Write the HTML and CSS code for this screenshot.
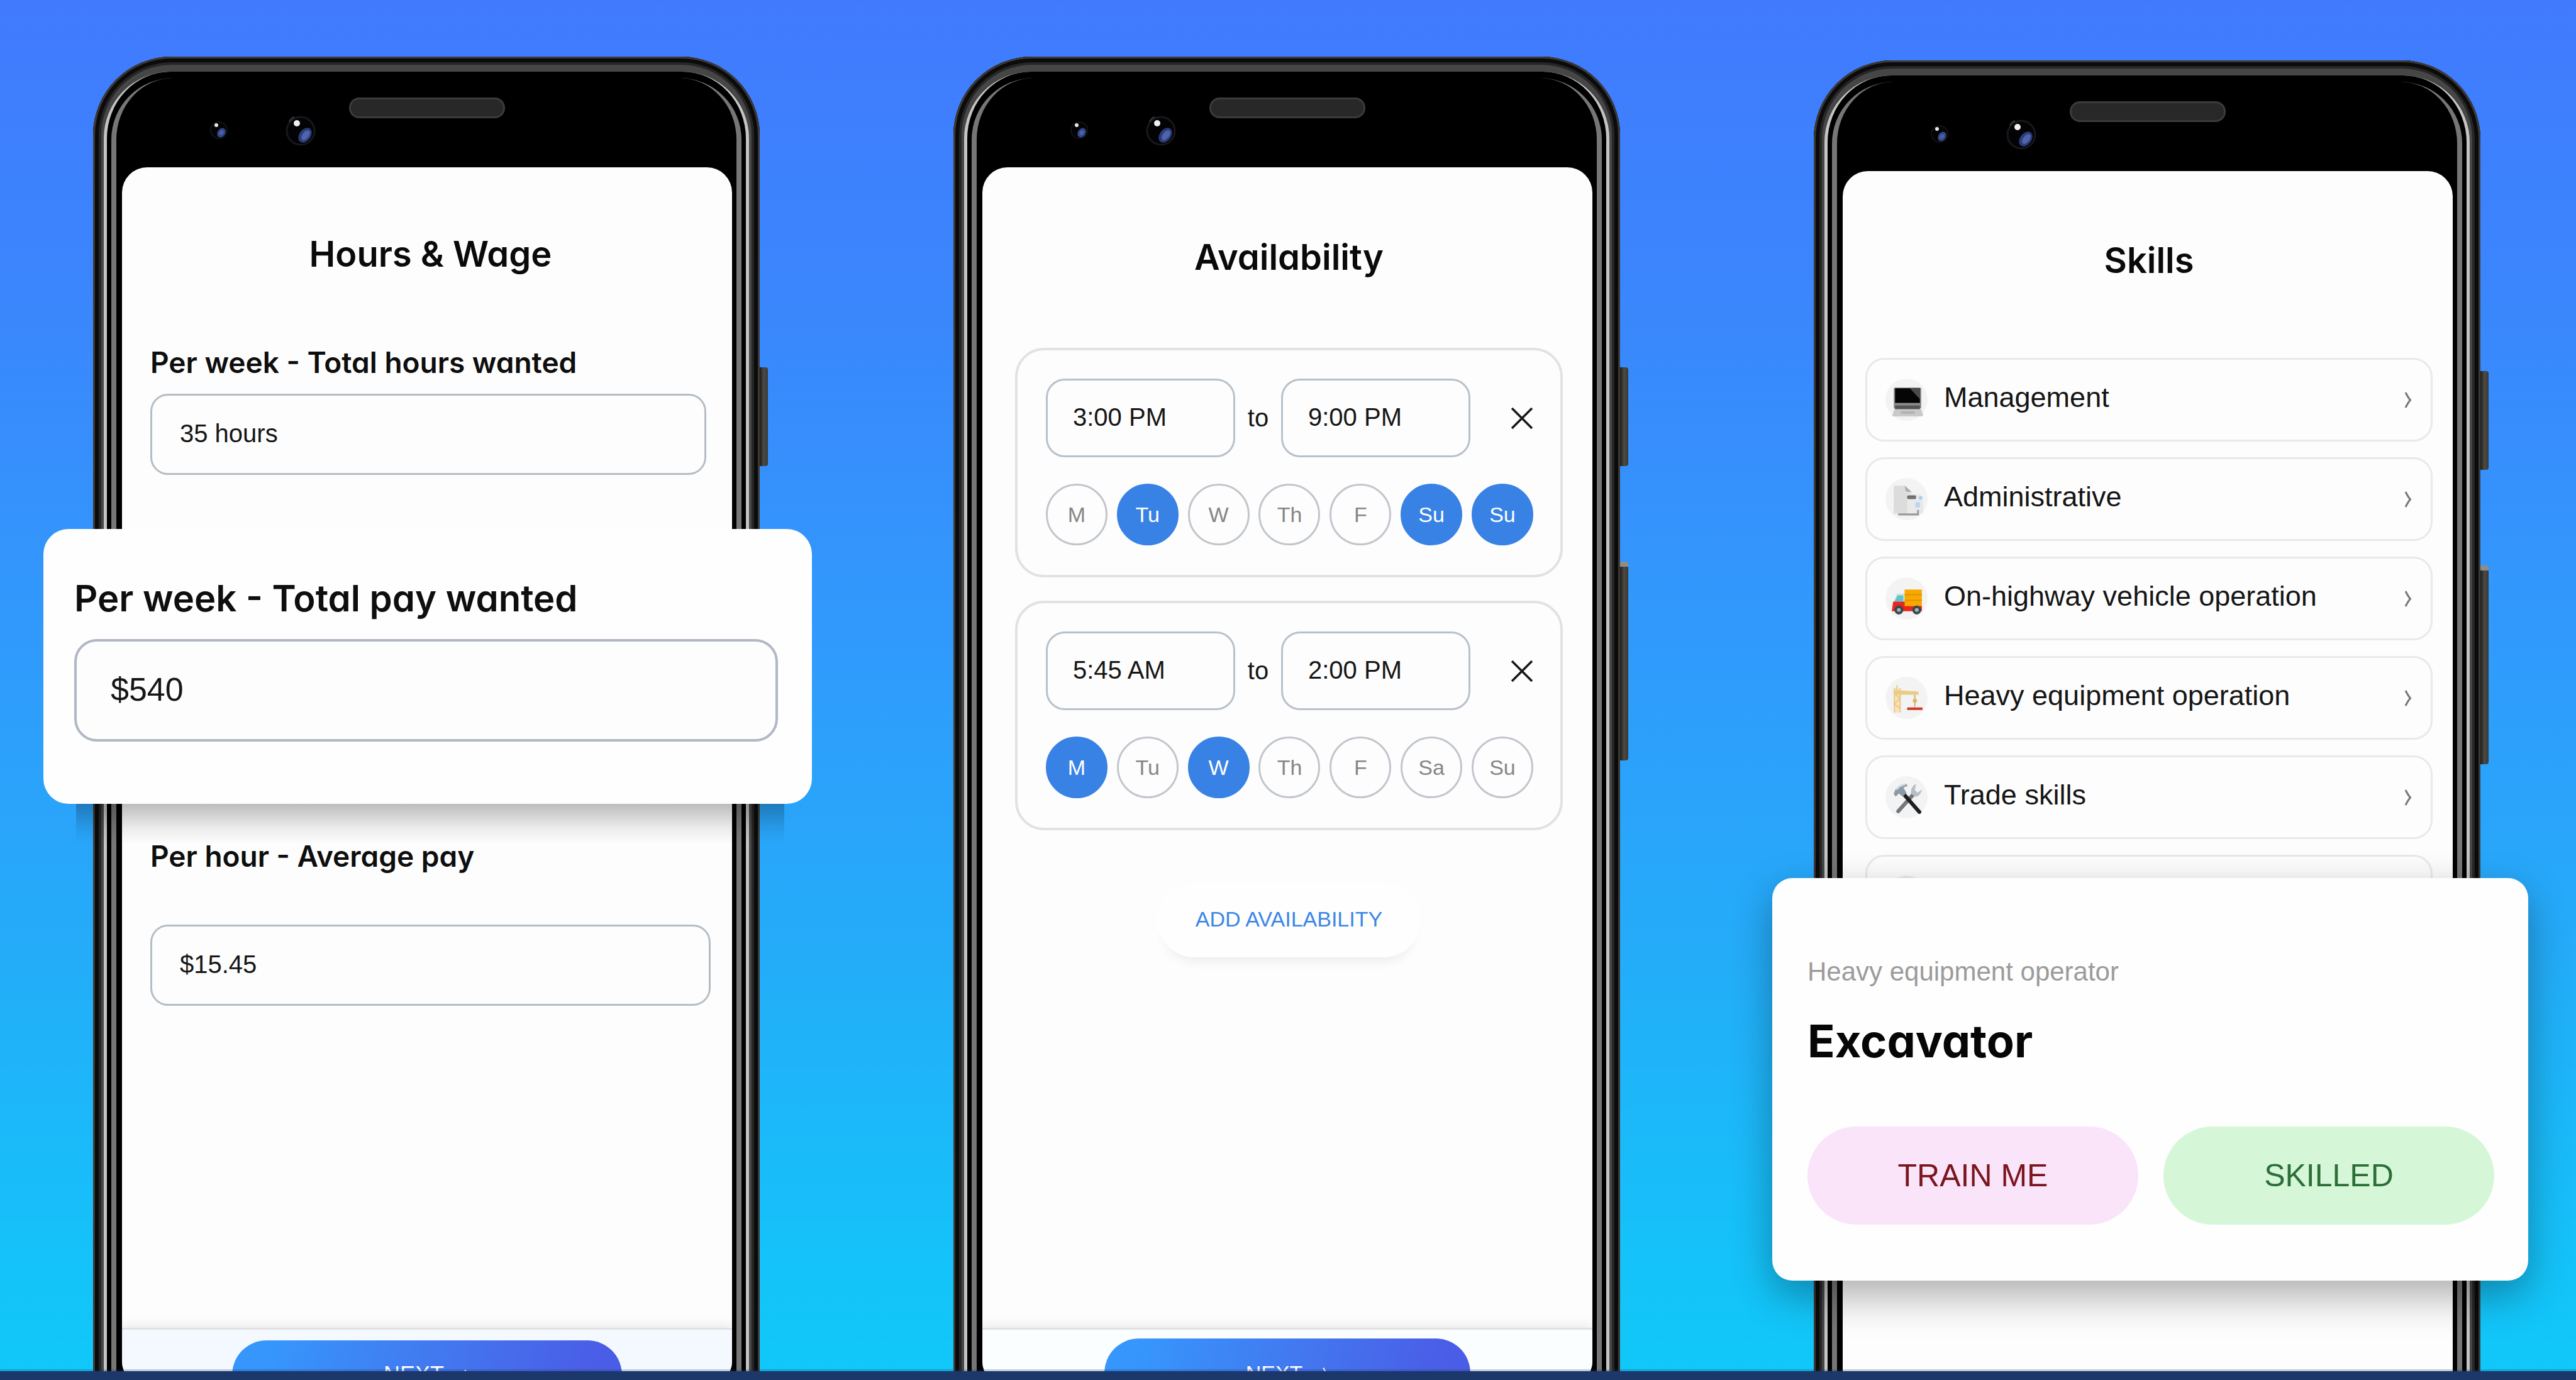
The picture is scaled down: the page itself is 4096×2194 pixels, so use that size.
FILE: index.html
```html
<!DOCTYPE html>
<html lang="en">
<head>
<meta charset="utf-8">
<meta name="viewport" content="width=device-width, initial-scale=1">
<title>Work preferences</title>
<link rel="stylesheet" href="styles.css">
</head>
<body>
<svg class="sprite" aria-hidden="true">
  <symbol id="cameras" viewBox="0 0 200 80">
    <circle cx="30" cy="47" r="13" fill="#040406" stroke="#131316" stroke-width="2"/>
    <circle cx="26" cy="39" r="3" fill="#e8e8ea"/>
    <ellipse cx="34" cy="51" rx="6" ry="8" fill="#344888" transform="rotate(35 34 51)"/>
    <ellipse cx="34" cy="51" rx="3" ry="4" fill="#4a60aa" transform="rotate(35 34 51)"/>
    <circle cx="160" cy="48" r="22" fill="#030305" stroke="#18181c" stroke-width="3"/>
    <path d="M142 34q2-6 8-8" fill="none" stroke="#3a3a3e" stroke-width="2"/>
    <circle cx="154" cy="36" r="5" fill="#f0f0f0"/>
    <ellipse cx="167" cy="55" rx="9" ry="13" fill="#2c3d7c" transform="rotate(38 167 55)"/>
    <ellipse cx="168" cy="55" rx="5" ry="9" fill="#5064ac" transform="rotate(38 168 55)"/>
  </symbol>
  <symbol id="cross" viewBox="0 0 36 36">
    <path d="M2 2L34 34M34 2L2 34" fill="none" stroke="currentColor" stroke-width="3.5"/>
  </symbol>
  <symbol id="chevron" viewBox="0 0 12 26">
    <path d="M2 1Q6 9 9.500 13Q6 17 2 25" fill="none" stroke="currentColor" stroke-width="3"/>
  </symbol>
</svg>

<main class="stage">

  <section class="phone">
    <div class="bezel"><span class="speaker"></span><svg class="cameras"><use href="#cameras"/></svg></div>
    <span class="key key-power"></span>
    <form class="screen wage">
      <h2 class="title">Hours &amp; Wage</h2>
      <div class="field field-hours">
        <label for="hours">Per week - Total hours wanted</label>
        <input id="hours" type="text" value="35 hours">
      </div>
      <div class="field field-rate">
        <label for="rate">Per hour - Average pay</label>
        <input id="rate" type="text" value="$15.45">
      </div>
      <div class="dock dock-tint">
        <button class="next" type="button">NEXT <svg class="next-icon"><use href="#chevron"/></svg></button>
      </div>
    </form>
    <div class="popup popup-pay">
      <label for="pay">Per week - Total pay wanted</label>
      <input id="pay" type="text" value="$540">
    </div>
  </section>

  <section class="phone">
    <div class="bezel"><span class="speaker"></span><svg class="cameras"><use href="#cameras"/></svg></div>
    <span class="key key-power"></span>
    <span class="key key-volume"></span>
    <form class="screen availability">
      <h2 class="title">Availability</h2>
      <fieldset class="slot">
        <div class="times">
          <input type="text" value="3:00 PM" aria-label="Start time">
          <span class="to">to</span>
          <input type="text" value="9:00 PM" aria-label="End time">
          <button class="remove" type="button" aria-label="Remove"><svg><use href="#cross"/></svg></button>
        </div>
        <div class="days">
          <label class="day"><input type="checkbox">M</label>
          <label class="day"><input type="checkbox" checked>Tu</label>
          <label class="day"><input type="checkbox">W</label>
          <label class="day"><input type="checkbox">Th</label>
          <label class="day"><input type="checkbox">F</label>
          <label class="day"><input type="checkbox" checked>Su</label>
          <label class="day"><input type="checkbox" checked>Su</label>
        </div>
      </fieldset>
      <fieldset class="slot">
        <div class="times">
          <input type="text" value="5:45 AM" aria-label="Start time">
          <span class="to">to</span>
          <input type="text" value="2:00 PM" aria-label="End time">
          <button class="remove" type="button" aria-label="Remove"><svg><use href="#cross"/></svg></button>
        </div>
        <div class="days">
          <label class="day"><input type="checkbox" checked>M</label>
          <label class="day"><input type="checkbox">Tu</label>
          <label class="day"><input type="checkbox" checked>W</label>
          <label class="day"><input type="checkbox">Th</label>
          <label class="day"><input type="checkbox">F</label>
          <label class="day"><input type="checkbox">Sa</label>
          <label class="day"><input type="checkbox">Su</label>
        </div>
      </fieldset>
      <button class="add" type="button">ADD AVAILABILITY</button>
      <div class="dock">
        <button class="next" type="button">NEXT <svg class="next-icon"><use href="#chevron"/></svg></button>
      </div>
    </form>
  </section>

  <section class="phone phone-skills">
    <div class="bezel"><span class="speaker"></span><svg class="cameras"><use href="#cameras"/></svg></div>
    <span class="key key-power"></span>
    <span class="key key-volume"></span>
    <div class="screen skills">
      <h2 class="title">Skills</h2>
      <nav class="list">
        <a class="row" href="#management">
          <svg class="badge" viewBox="0 0 66 66">
            <circle cx="33" cy="33" r="33" fill="#f3f3f3"/>
            <rect x="13" y="14" width="43" height="33" rx="2" fill="#8b8b8b"/>
            <rect x="15" y="15" width="39" height="23" fill="#050505"/>
            <path d="M38 15h16v17z" fill="#4b4b4b"/>
            <rect x="15" y="42" width="39" height="6" fill="#555"/>
            <path d="M14 48h42l3 9q0 2-3 2H13q-3 0-2-2z" fill="#c9c9c9"/>
            <rect x="24" y="51" width="22" height="4" fill="#b2b2b2"/>
          </svg>
          <span class="row-text">Management</span>
          <svg class="row-arrow"><use href="#chevron"/></svg>
        </a>
        <a class="row" href="#administrative">
          <svg class="badge" viewBox="0 0 66 66">
            <circle cx="33" cy="33" r="33" fill="#f3f3f3"/>
            <path d="M13 12h18l9 9v35H13z" fill="#dcdcdc"/>
            <path d="M30 12l2 9 9 1z" fill="#a9a9a9"/>
            <path d="M34 25h20l5 9v22H34z" fill="#e9e9e9"/>
            <rect x="34" y="27" width="14" height="6" rx="2" fill="#707070"/>
            <rect x="47" y="38" width="7" height="8" fill="#b5d6f2"/>
            <circle cx="55" cy="31" r="3" fill="#a9cdf3"/>
            <path d="M20 57h31v-7" fill="none" stroke="#9b9b9b" stroke-width="3"/>
          </svg>
          <span class="row-text">Administrative</span>
          <svg class="row-arrow"><use href="#chevron"/></svg>
        </a>
        <a class="row" href="#on-highway">
          <svg class="badge" viewBox="0 0 66 66">
            <circle cx="33" cy="33" r="33" fill="#f3f3f3"/>
            <path d="M18 25h13v16H12z" fill="#d9e2e2"/>
            <path d="M19 28h9v10H14z" fill="#5cc3d0"/>
            <path d="M12 38h19v6h26v9H10z" fill="#e8261c"/>
            <rect x="30" y="19" width="27" height="26" fill="#f7a900"/>
            <path d="M30 27h27M30 36h27" stroke="#e29200" stroke-width="2"/>
            <circle cx="21" cy="51" r="7" fill="#3b474e"/><circle cx="21" cy="51" r="3" fill="#a8b4ba"/>
            <circle cx="49" cy="51" r="7" fill="#3b474e"/><circle cx="49" cy="51" r="3" fill="#a8b4ba"/>
          </svg>
          <span class="row-text">On-highway vehicle operation</span>
          <svg class="row-arrow"><use href="#chevron"/></svg>
        </a>
        <a class="row" href="#heavy-equipment">
          <svg class="badge" viewBox="0 0 66 66">
            <circle cx="33" cy="33" r="33" fill="#f3f3f3"/>
            <rect x="14" y="18" width="9" height="38" fill="#f8e3bb"/>
            <path d="M14 18v38M23 18v38M14 26l9 8-9 8 9 8M18 13v8" fill="none" stroke="#ecc885" stroke-width="2"/>
            <path d="M13 21l39 2v5H13z" fill="#eccb84"/>
            <path d="M46 28v19" stroke="#c6b183" stroke-width="2"/>
            <rect x="43" y="35" width="6" height="5" fill="#e2b34c"/>
            <rect x="34" y="48" width="24" height="4" fill="#cf3a27"/>
          </svg>
          <span class="row-text">Heavy equipment operation</span>
          <svg class="row-arrow"><use href="#chevron"/></svg>
        </a>
        <a class="row" href="#trade">
          <svg class="badge" viewBox="0 0 66 66">
            <circle cx="33" cy="33" r="33" fill="#f3f3f3"/>
            <path d="M20 55L46 26" stroke="#72777b" stroke-width="6" stroke-linecap="round"/>
            <path d="M48 12q-9 4-8 15l6 5q9 0 11-11l-7 5-4-4z" fill="#b4bfc6"/>
            <path d="M25 24L53 56" stroke="#1d1f21" stroke-width="6" stroke-linecap="round"/>
            <path d="M13 28q3-14 19-16l3 3-7 3 5 8-6 6-6-5-5 5z" fill="#8b9aa3"/>
            <path d="M17 21q5-7 14-8" fill="none" stroke="#cfdbe2" stroke-width="3"/>
          </svg>
          <span class="row-text">Trade skills</span>
          <svg class="row-arrow"><use href="#chevron"/></svg>
        </a>
        <div class="row">
          <svg class="badge" viewBox="0 0 66 66"><circle cx="33" cy="33" r="33" fill="#ececec"/></svg>
        </div>
      </nav>
    </div>
    <div class="popup popup-skill">
      <p class="kind">Heavy equipment operator</p>
      <h3 class="name">Excavator</h3>
      <div class="choices">
        <button class="choice choice-train" type="button">TRAIN ME</button>
        <button class="choice choice-skilled" type="button">SKILLED</button>
      </div>
    </div>
  </section>

</main>
<footer class="strip"></footer>
</body>
</html>
```
FILE: styles.css
```css
* { box-sizing: border-box; }

body {
  margin: 0;
  height: 100vh;
  display: flex;
  flex-direction: column;
  overflow: hidden;
  background: linear-gradient(#417afe 0%, #3a87fc 23%, #3199fc 45%, #24acf9 69%, #14c3f9 92%, #10c8f9 100%);
  font-family: "Liberation Sans", Arial, sans-serif;
  color: #161616;
}

.sprite { position: absolute; width: 0; height: 0; }

button, input { font: inherit; color: inherit; margin: 0; }
button { border: 0; padding: 0; background: none; cursor: pointer; }

.stage {
  flex: 1;
  min-height: 0;
  overflow: hidden;
  display: flex;
  gap: 308px;
  padding: 90px 152px 0 148px;
}

.strip {
  height: 14px;
  background: #1c3769;
  box-shadow: 0 -3px 0 rgba(28, 55, 105, .25);
  z-index: 3;
}

/* Phone shell */
.phone {
  flex: 1;
  min-width: 0;
  position: relative;
  display: flex;
  flex-direction: column;
  margin-bottom: -24px;
  padding: 0 44px 0 46px;
  border-radius: 125px 125px 0 0;
  background: #464646;
  box-shadow:
    inset 0 0 0 3px #3d3934,
    inset 0 0 0 9px #0b0b0b,
    inset 0 0 0 13px #262626;
}
.phone-skills { margin-top: 6px; margin-bottom: -64px; }

.phone::before,
.phone::after {
  content: "";
  position: absolute;
  background: #000;
  border-style: solid;
}
.phone::before {
  inset: 24px 17px 0;
  border-width: 0 5px;
  border-color: #c4c4c4;
  border-radius: 106px 106px 0 0;
}
.phone::after {
  inset: 34px 29px 0;
  border-width: 0 8px;
  border-color: #767676;
  border-radius: 98px 98px 0 0;
}

.bezel {
  position: relative;
  z-index: 1;
  height: 176px;
  padding-top: 65px;
}
.speaker {
  display: block;
  width: 248px;
  height: 33px;
  margin: 0 auto;
  border: 3px solid #3b3b3b;
  border-radius: 16px;
  background: #282828;
}
.cameras {
  position: absolute;
  left: 124px;
  top: 70px;
  width: 200px;
  height: 80px;
}

.key {
  position: absolute;
  left: 100%;
  width: 13px;
  background: linear-gradient(90deg, #1d1d1b, #4b4a45 50%, #3a3936);
  border-radius: 0 4px 4px 0;
}
.key-power { top: 494px; height: 157px; }
.key-volume { top: 803px; height: 316px; border-top: 8px solid #8f8b88; }

.screen {
  position: relative;
  z-index: 1;
  flex: 1;
  min-height: 0;
  display: flex;
  flex-direction: column;
  overflow: hidden;
  border-radius: 40px;
  background: #fdfdfd;
}

.title {
  margin: 0;
  font: 600 56px/64px Inter, "Open Sans", sans-serif;
  font-feature-settings: "cv11";
  text-align: center;
  color: #0a0a0a;
}

/* Hours and wage */
.wage { padding: 106px 34px 0 45px; }

.field { display: flex; flex-direction: column; }
.field label,
.popup-pay label {
  font-family: Inter, "Open Sans", sans-serif;
  font-weight: 600;
  font-feature-settings: "cv11";
  color: #0e0e0e;
}
.field label { font-size: 46px; line-height: 48px; }
.field input {
  width: 100%;
  height: 129px;
  padding: 0 44px 3px;
  border: 3px solid #b5bdc4;
  border-radius: 28px;
  background: #fdfdfd;
  font-size: 40px;
}
.field-hours { margin: 116px 7px 0 0; gap: 26px; }
.field-rate { margin-top: 582px; gap: 85px; }

.dock {
  height: 93px;
  flex: none;
  margin-top: auto;
  padding-top: 14px;
  display: flex;
  justify-content: center;
  align-items: flex-start;
  border-top: 3px solid #e2e2e2;
  background: #fbfeff;
  box-shadow: 0 -6px 14px rgba(0, 0, 0, .07);
}
.dock-tint { background: #f3f9ff; padding-top: 17px; }
.wage .dock { margin-left: -45px; margin-right: -34px; }
.availability .dock { margin-left: -52px; margin-right: -47px; }

.next {
  flex: none;
  width: 60%;
  height: 110px;
  display: flex;
  align-items: center;
  justify-content: center;
  gap: 30px;
  border-radius: 55px;
  background: linear-gradient(105deg, #3696fc 10%, #4279f0 50%, #4a5de6 90%);
  color: #fff;
  font-size: 34px;
}
.dock-tint .next { width: 64%; font-size: 36px; }
.next-icon { width: 12px; height: 18px; }

/* Availability */
.availability { padding: 111px 47px 0 52px; }

.slot {
  margin: 0 0 37px;
  padding: 45px 43px 47px 45px;
  border: 4px solid #e2e2e2;
  border-radius: 46px;
  display: flex;
  flex-direction: column;
  gap: 42px;
  min-width: 0;
}
.title + .slot { margin-top: 112px; }

.times { display: flex; align-items: center; }
.times input {
  width: 301px;
  height: 125px;
  padding: 0 40px 3px;
  border: 3px solid #b8c1cb;
  border-radius: 30px;
  background: #fdfdfd;
  font-size: 40px;
}
.to { flex: none; width: 73px; text-align: center; font-size: 40px; }
.remove { margin-left: auto; width: 36px; height: 36px; }
.remove svg { display: block; width: 36px; height: 36px; }

.days { display: flex; justify-content: space-between; }
.day {
  position: relative;
  width: 98px;
  height: 98px;
  border: 3px solid #c1c6cc;
  border-radius: 50%;
  display: flex;
  align-items: center;
  justify-content: center;
  font-size: 34px;
  color: #868686;
}
.day input { position: absolute; inset: 0; width: 100%; height: 100%; opacity: 0; }
.day:has(:checked) { background: #3982e5; border-color: #3982e5; color: #fff; }

.add {
  align-self: center;
  margin-top: 47px;
  width: 419px;
  height: 118px;
  padding-bottom: 3px;
  border-radius: 59px;
  background: #fefefe;
  box-shadow: 0 18px 18px -12px rgba(0, 0, 0, .07);
  font-size: 34px;
  color: #3b86e6;
}

/* Skills */
.skills { padding: 110px 32px 0 36px; }

.list { margin-top: 123px; display: flex; flex-direction: column; gap: 25px; }
.row {
  flex: none;
  height: 133px;
  display: flex;
  align-items: center;
  padding: 0 30px 0 29px;
  border: 3px solid #e9e9e9;
  border-radius: 30px;
  color: #161616;
  text-decoration: none;
}
.badge { flex: none; width: 67px; height: 67px; }
.row-text { margin-left: 26px; padding-bottom: 8px; font-size: 45px; line-height: 52px; }
.row-arrow { margin-left: auto; width: 12px; height: 26px; color: #777; }

/* Cards that float above the phones */
.popup {
  position: absolute;
  z-index: 2;
  display: flex;
  flex-direction: column;
  background: #fefefe;
}
.popup-pay {
  left: -79px;
  right: -83px;
  top: 751px;
  padding: 82px 54px 99px 49px;
  gap: 37px;
  border-radius: 40px;
}
.popup-pay::before {
  content: "";
  position: absolute;
  z-index: -1;
  left: 52px;
  right: 44px;
  top: 100%;
  height: 64px;
  background: linear-gradient(rgba(0, 0, 0, .26), rgba(0, 0, 0, .07) 60%, transparent);
}
.popup-pay label { font-size: 58px; line-height: 56px; }
.popup-pay input {
  width: 100%;
  height: 163px;
  padding: 0 54px 3px;
  border: 4px solid #b0b7c5;
  border-radius: 36px;
  background: #fdfdfd;
  font-size: 52px;
}

.popup-skill {
  left: -66px;
  right: -76px;
  top: 1300px;
  padding: 125px 54px 89px 56px;
  border-radius: 32px;
  box-shadow: 0 24px 64px rgba(0, 0, 0, .32);
}
.kind { margin: 0; font-size: 42px; line-height: 48px; color: #9b9b9b; }
.name {
  margin: 46px 0 0;
  font: 700 72px/80px Inter, "Open Sans", sans-serif;
  font-feature-settings: "cv11";
  color: #060606;
}
.choices { margin-top: 96px; display: flex; gap: 40px; }
.choice { flex: 1; height: 156px; border-radius: 78px; font-size: 50px; }
.choice-train { background: #f9e4fa; color: #7b141c; }
.choice-skilled { background: #d5f7d8; color: #2b6e36; }
```
